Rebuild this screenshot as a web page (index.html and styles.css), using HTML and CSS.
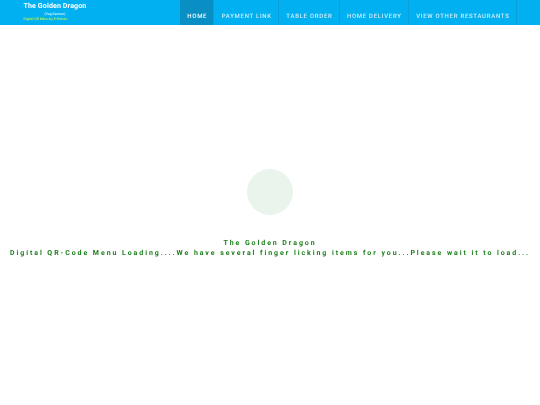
FILE: index.html
```html
<!DOCTYPE html>
<html lang="en">
<head>
<meta charset="utf-8">
<title>The Golden Dragon</title>
<link rel="stylesheet" href="styles.css">
</head>
<body>
<header class="topbar">
  <div class="brand">
    <div class="brand-name">The Golden Dragon</div>
    <div class="brand-sub">(Veg Section)</div>
    <div class="brand-tag">Digital QR Menu by E-Kichen</div>
  </div>
  <nav class="nav">
    <a class="nav-item active">HOME</a>
    <a class="nav-item">PAYMENT LINK</a>
    <a class="nav-item">TABLE ORDER</a>
    <a class="nav-item">HOME DELIVERY</a>
    <a class="nav-item">VIEW OTHER RESTAURANTS</a>
  </nav>
</header>
<main class="loader">
  <div class="spinner"></div>
  <p class="line first">The Golden Dragon</p>
  <p class="line">Digital QR-Code Menu Loading....We have several finger licking items for you...Please wait it to load...</p>
</main>
</body>
</html>
```
FILE: styles.css
```css
html, body {
  margin: 0;
  padding: 0;
  background: #fff;
  font-family: Roboto, "Liberation Sans", sans-serif;
  text-rendering: geometricPrecision;
}
.topbar {
  display: flex;
  height: 25px;
  background: #00b0f0;
  overflow: hidden;
}
.brand {
  width: 180px;
  flex: none;
  box-sizing: border-box;
  padding: 1px 0 0 23.5px;
  color: #fff;
  will-change: transform;
}
.brand-name {
  font-size: 7.1px;
  font-weight: 700;
  line-height: 10px;
  letter-spacing: 0.1px;
}
.brand-sub {
  font-size: 3.5px;
  line-height: 5px;
  margin-top: 1px;
  padding-left: 21px;
}
.brand-tag {
  font-size: 3.5px;
  line-height: 5px;
  color: #d8ff3c;
}
.nav {
  display: flex;
  align-items: stretch;
  will-change: transform;
}
.nav-item {
  display: flex;
  align-items: flex-end;
  box-sizing: border-box;
  padding: 0 6.2px 4.5px 7.3px;
  font-size: 6px;
  line-height: 9px;
  font-weight: 500;
  letter-spacing: 0.72px;
  color: #cfeefa;
  border-right: 1px solid #0a9fdb;
  white-space: nowrap;
}
.nav-item.active {
  background: #0a8fc4;
  color: #fff;
}
.loader {
  display: flex;
  flex-direction: column;
  align-items: center;
  padding-top: 144px;
  will-change: transform;
}
.spinner {
  width: 46px;
  height: 46px;
  border-radius: 50%;
  background: #e9f4ec;
  margin-bottom: 23px;
}
.line {
  margin: 0;
  font-size: 7px;
  line-height: 10px;
  font-weight: 700;
  letter-spacing: 1.93px;
  color: #1a7f1a;
  white-space: nowrap;
}
```
